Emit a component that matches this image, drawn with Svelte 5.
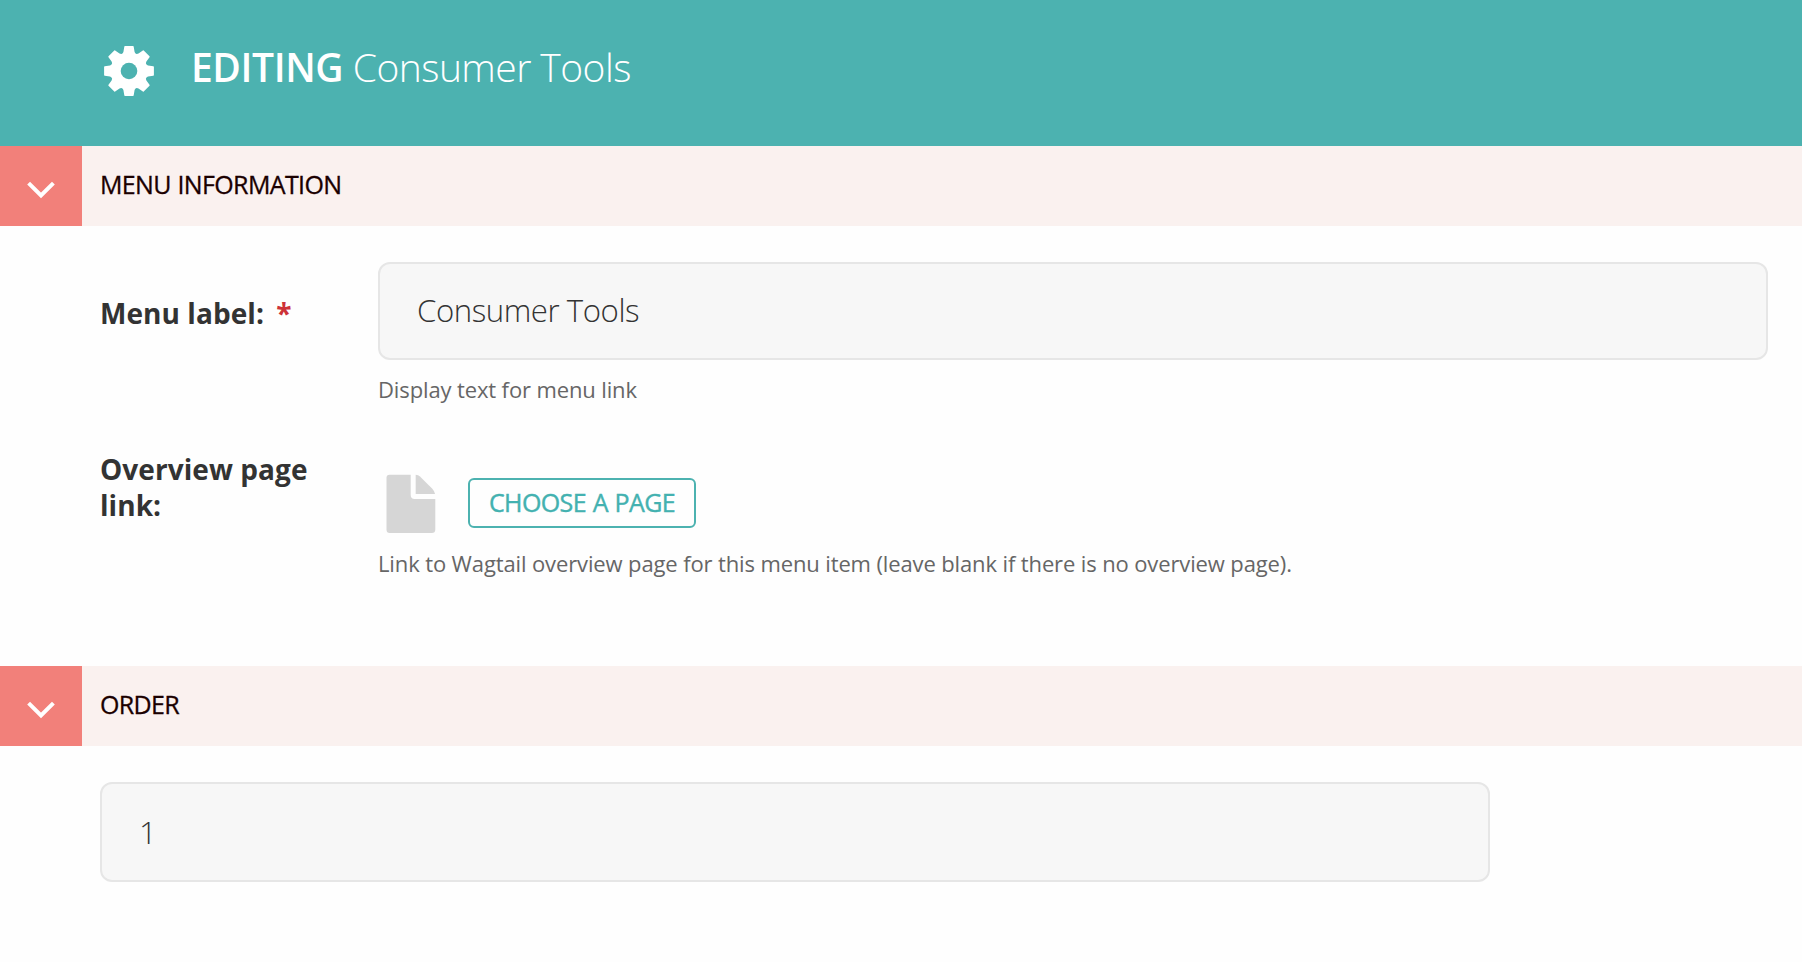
<script>
  let label = $state('Consumer Tools');
  let order = $state('1');
  const teeth = [0, 45, 90, 135, 180, 225, 270, 315];
</script>

{#snippet sectionBar(title)}
  <div class="bar">
    <button class="toggle" aria-label="Toggle section">
      <svg width="28" height="18" viewBox="0 0 28 18">
        <path d="M1.6 2.1 L14 14.5 L26.4 2.1" fill="none" stroke="#fff" stroke-width="4" />
      </svg>
    </button>
    <h2>{title}</h2>
  </div>
{/snippet}

<main>
  <header>
    <svg class="gear" width="50" height="50" viewBox="-25 -25 50 50">
      <mask id="hole">
        <rect x="-25" y="-25" width="50" height="50" fill="#fff" />
        <circle r="8.3" fill="#000" />
      </mask>
      <g fill="#fff" mask="url(#hole)">
        <circle r="18.6" />
        {#each teeth as angle}
          <path transform="rotate({angle})" d="M-4.1 -24.9 H4.1 Q4.6 -24.9 4.7 -24.3 L5.6 -19 L7.2 -16 H-7.2 L-5.6 -19 L-4.7 -24.3 Q-4.6 -24.9 -4.1 -24.9Z" />
        {/each}
      </g>
    </svg>
    <h1><b>EDITING</b> <span>Consumer Tools</span></h1>
  </header>

  <section class="info">
    {@render sectionBar('MENU INFORMATION')}
    <div class="fields">
      <div class="row first">
        <label for="label">Menu label: <em>*</em></label>
        <div class="control">
          <input id="label" bind:value={label} />
          <p class="help">Display text for menu link</p>
        </div>
      </div>
      <div class="row second">
        <label for="page">Overview page link:</label>
        <div class="control">
          <div class="chooser">
            <svg width="50" height="59" viewBox="0 0 50 59" fill="#d6d6d6">
              <path d="M3.5 0.7 H24.7 V21 Q24.7 25 28.7 25 H49.3 V55.5 Q49.3 59 45.8 59 H3.7 Q0.5 59 0.5 55.5 V3.7 Q0.5 0.7 3.5 0.7Z" />
              <path d="M29.7 0.7 Q32.3 0.9 34 2.5 L46.3 14.8 Q48.4 17 49.1 20 H29.7Z" />
            </svg>
            <button id="page" class="choose">CHOOSE A PAGE</button>
          </div>
          <p class="help">Link to Wagtail overview page for this menu item (leave blank if there is no overview page).</p>
        </div>
      </div>
    </div>
  </section>

  <section>
    {@render sectionBar('ORDER')}
    <div class="order">
      <input class="tall" aria-label="Order" bind:value={order} />
    </div>
  </section>
</main>

<style>
  :global(body) { background: #fefefe; }
  main {
    width: 1802px;
    height: 962px;
    overflow: hidden;
    font-family: "Open Sans", sans-serif;
    color: #333;
  }
  h1, h2, p { margin: 0; font-weight: 400; }
  header {
    display: flex;
    height: 146px;
    box-sizing: border-box;
    padding: 37px 0 0 104px;
    background: #4cb2b0;
    color: #fff;
  }
  .gear { margin-top: 9px; }
  h1 {
    margin-left: 37px;
    font-size: 39px;
    line-height: 60px;
    font-weight: 300;
    letter-spacing: -0.55px;
    white-space: nowrap;
  }
  h1 b { font-weight: 600; letter-spacing: -0.4px; }
  .bar { display: flex; height: 80px; background: #faf1ef; }
  .toggle {
    width: 82px;
    border: 0;
    padding: 8px 0 0;
    background: #f2807a;
    display: flex;
    align-items: center;
    justify-content: center;
  }
  h2 {
    padding-left: 18px;
    font-size: 25px;
    line-height: 77px;
    color: #1a0000;
    letter-spacing: -0.64px;
    word-spacing: 0.8px;
    -webkit-text-stroke: 0.3px #1a0000;
  }
  .info { height: 520px; }
  .fields { padding: 36px 34px 0 100px; }
  .row { display: flex; }
  .first { height: 189px; }
  label {
    width: 278px;
    flex: none;
    font-size: 28px;
    line-height: 36px;
    font-weight: 700;
    letter-spacing: 0.06px;
  }
  .first label { padding-top: 33px; }
  .second label { width: 220px; padding-right: 58px; }
  em { font-style: normal; color: #cd3238; margin-left: 5px; }
  .control { flex: 1; }
  input {
    display: block;
    width: 100%;
    height: 98px;
    box-sizing: border-box;
    border: 2px solid #e6e6e6;
    border-radius: 12px;
    background: #f7f7f7;
    padding: 0 37px 3px;
    font: 300 31.2px "Open Sans", sans-serif;
    letter-spacing: -0.45px;
    color: #333;
    outline: none;
  }
  .help {
    font-size: 22px;
    line-height: 30px;
    letter-spacing: -0.125px;
    color: #666;
    margin-top: 14px;
    white-space: nowrap;
  }
  .chooser { display: flex; padding: 23px 0 0 8px; height: 59px; }
  .choose {
    width: 228px;
    height: 50px;
    margin: 4px 0 0 32px;
    box-sizing: border-box;
    border: 2px solid #4cb2b0;
    border-radius: 6px;
    background: transparent;
    color: #43b1b0;
    font: 400 25px/40px "Open Sans", sans-serif;
    padding: 0 0 3px;
    letter-spacing: -0.6px;
    word-spacing: 0.8px;
    -webkit-text-stroke: 0.4px #43b1b0;
    white-space: nowrap;
  }
  .second .help { margin-top: 15px; }
  .order { padding: 36px 312px 0 100px; }
  .tall { height: 100px; padding-bottom: 0; }
</style>
